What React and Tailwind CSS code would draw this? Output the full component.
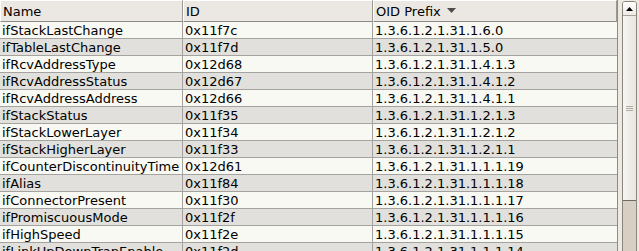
import React from 'react'

const rows = [
  ['ifStackLastChange', '0x11f7c', '1.3.6.1.2.1.31.1.6.0'],
  ['ifTableLastChange', '0x11f7d', '1.3.6.1.2.1.31.1.5.0'],
  ['ifRcvAddressType', '0x12d68', '1.3.6.1.2.1.31.1.4.1.3'],
  ['ifRcvAddressStatus', '0x12d67', '1.3.6.1.2.1.31.1.4.1.2'],
  ['ifRcvAddressAddress', '0x12d66', '1.3.6.1.2.1.31.1.4.1.1'],
  ['ifStackStatus', '0x11f35', '1.3.6.1.2.1.31.1.2.1.3'],
  ['ifStackLowerLayer', '0x11f34', '1.3.6.1.2.1.31.1.2.1.2'],
  ['ifStackHigherLayer', '0x11f33', '1.3.6.1.2.1.31.1.2.1.1'],
  ['ifCounterDiscontinuityTime', '0x12d61', '1.3.6.1.2.1.31.1.1.1.19'],
  ['ifAlias', '0x11f84', '1.3.6.1.2.1.31.1.1.1.18'],
  ['ifConnectorPresent', '0x11f30', '1.3.6.1.2.1.31.1.1.1.17'],
  ['ifPromiscuousMode', '0x11f2f', '1.3.6.1.2.1.31.1.1.1.16'],
  ['ifHighSpeed', '0x11f2e', '1.3.6.1.2.1.31.1.1.1.15'],
  ['ifLinkUpDownTrapEnable', '0x11f2d', '1.3.6.1.2.1.31.1.1.1.14'],
]

function HeaderCell({ children, className = '' }) {
  return (
    <div
      className={`h-[22px] flex items-center pl-[2px] bg-[#ebe8e3] border-t border-t-white border-l border-l-white border-r border-r-[#9d9890] border-b border-b-[#8f8a82] ${className}`}
    >
      {children}
    </div>
  )
}

export default function App() {
  return (
    <div
      className="w-[639px] h-[251px] overflow-hidden bg-[#ede9e3] flex text-[13px] text-black leading-none"
      style={{ fontFamily: '"DejaVu Sans", sans-serif' }}
    >
      {/* Tabla */}
      <div className="w-[618px] shrink-0 border-r border-r-[#8f8a82]">
        <div className="flex">
          <HeaderCell className="w-[183px]">Name</HeaderCell>
          <HeaderCell className="w-[190px]">ID</HeaderCell>
          <HeaderCell className="flex-1">
            <span>OID Prefix</span>
            <svg width="9" height="6" viewBox="0 0 9 6" className="ml-[6px]">
              <path d="M0 0 H9 L4.5 5 Z" fill="#4d4d4d" />
            </svg>
          </HeaderCell>
        </div>
        {rows.map((r, i) => (
          <div
            key={r[0]}
            className={`flex h-[17px] border-b border-b-[#a5a39f] ${i % 2 === 0 ? 'bg-[#f9f9f4]' : 'bg-[#e1e0dc]'}`}
          >
            <div className="w-[183px] pl-[2px] flex items-center border-r border-r-[#a5a39f]">{r[0]}</div>
            <div className="w-[190px] pl-[2px] flex items-center border-r border-r-[#a5a39f]">{r[1]}</div>
            <div className="flex-1 pl-[2px] flex items-center">{r[2]}</div>
          </div>
        ))}
      </div>

      {/* Scrollbar */}
      <div className="ml-[4px] mt-[1px] w-[15px] h-[260px] flex flex-col border border-[#8a847a] rounded-t-[3px] overflow-hidden">
        <div className="h-[14px] shrink-0 flex items-center justify-center bg-gradient-to-b from-white to-[#eeebe6] border-b border-b-[#a8a298]">
          <svg width="7" height="4" viewBox="0 0 7 4">
            <path d="M3.5 0 L7 4 H0 Z" fill="#000" />
          </svg>
        </div>
        <div className="h-[185px] shrink-0 flex flex-col items-center justify-center gap-[1px] bg-gradient-to-r from-[#f7f6f4] to-[#e9e5df] border-b border-b-[#6f6a62]">
          <div className="w-[7px] h-px bg-[#b0aaa0]" />
          <div className="w-[7px] h-px bg-[#b0aaa0]" />
          <div className="w-[7px] h-px bg-[#b0aaa0]" />
        </div>
        <div className="flex-1 bg-[#d7cfc3]" />
      </div>
    </div>
  )
}
